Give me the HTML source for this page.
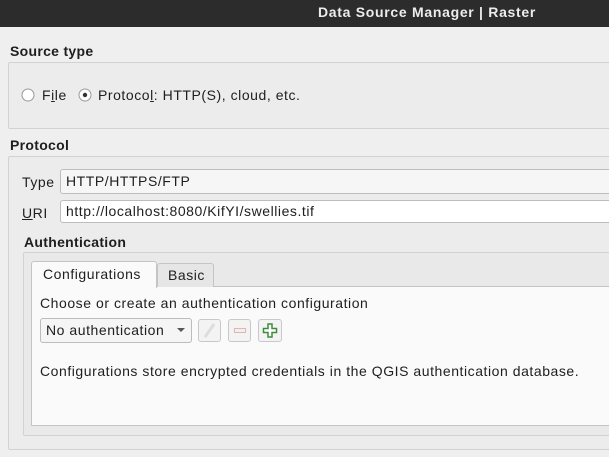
<!DOCTYPE html>
<html><head><style>
*{box-sizing:border-box;margin:0;padding:0}
body{width:609px;height:457px;background:#efefef;font-family:"Liberation Sans","DejaVu Sans",sans-serif;font-size:14px;letter-spacing:0.55px;color:#1e1e1e;position:relative;overflow:hidden}
.a{position:absolute;white-space:nowrap}
.title{left:0;top:0;width:609px;height:27px;background:#2c2c2c;color:#ececec;font-weight:bold;font-size:14px}
.b{font-weight:bold;letter-spacing:0.3px}
.grp{border:1px solid #d2d2d2;background:#ececec;border-radius:2px}
.inp{background:#fff;border:1px solid #bdbdbd;border-radius:3px;padding:3px 5px;font-size:14px}
.btn{border:1px solid #c8c8c8;border-radius:3px;background:#f3f3f3}
</style></head><body>
<div class="a title"><span class="a" style="left:318px;top:4px;letter-spacing:0.7px">Data Source Manager | Raster</span></div>
<div class="a b" style="left:10px;top:43px">Source type</div>
<div class="a grp" style="left:8px;top:62px;width:620px;height:67px"></div>
<svg class="a" style="left:21px;top:88px" width="14" height="14"><circle cx="7" cy="7" r="6" fill="#fff" stroke="#9a9a9a"/></svg>
<span class="a" style="left:42px;top:87px">F<u>i</u>le</span>
<svg class="a" style="left:78px;top:88px" width="14" height="14"><circle cx="7" cy="7" r="6" fill="#fff" stroke="#9a9a9a"/><circle cx="7" cy="7" r="2.2" fill="#333"/></svg>
<span class="a" style="left:98px;top:87px">Protoco<u>l</u>: HTTP(S), cloud, etc.</span>
<div class="a b" style="left:10px;top:137px">Protocol</div>
<div class="a grp" style="left:8px;top:156px;width:620px;height:294px"></div>
<span class="a" style="left:22px;top:174px">Type</span>
<div class="a inp" style="left:60px;top:169px;width:560px;height:25px;background:#f6f6f6">HTTP/HTTPS/FTP</div>
<span class="a" style="left:22px;top:205px"><u>U</u>RI</span>
<div class="a inp" style="left:60px;top:200px;width:560px;height:23px;padding-top:2px">http://localhost:8080/KifYI/swellies.tif</div>
<div class="a b" style="left:24px;top:234px">Authentication</div>
<div class="a grp" style="left:23px;top:252px;width:600px;height:184px;background:#e9e9e9"></div>
<div class="a" style="left:31px;top:286px;width:590px;height:140px;background:#fafafa;border:1px solid #c4c4c4"></div>
<div class="a" style="left:157px;top:263px;width:57px;height:24px;background:#e6e6e6;border:1px solid #c4c4c4;border-bottom:none;border-radius:3px 3px 0 0"></div>
<span class="a" style="left:168px;top:267px">Basic</span>
<div class="a" style="left:31px;top:261px;width:126px;height:27px;background:#fafafa;border:1px solid #c4c4c4;border-bottom:none;border-radius:3px 3px 0 0"></div>
<span class="a" style="left:43px;top:266px">Configurations</span>
<span class="a" style="left:40px;top:295px">Choose or create an authentication configuration</span>
<div class="a inp" style="left:40px;top:318px;width:152px;height:25px;background:#f5f5f5;border-color:#bcbcbc">No authentication</div>
<svg class="a" style="left:176px;top:327px" width="10" height="6"><path d="M1 1L5 5L9 1Z" fill="#555"/></svg>
<div class="a btn" style="left:198px;top:319px;width:23px;height:23px"></div>
<svg class="a" style="left:198px;top:319px" width="23" height="23"><path d="M7 18L16 5" stroke="#ddd" stroke-width="3"/></svg>
<div class="a btn" style="left:228px;top:319px;width:23px;height:23px"></div>
<div class="a" style="left:234px;top:328px;width:12px;height:5px;border:1px solid #d8b8b8;background:#f4eeee"></div>
<div class="a btn" style="left:258px;top:319px;width:24px;height:23px"></div>
<svg class="a" style="left:258px;top:319px" width="24" height="23"><path d="M10 5h4v4.5h4.5v4H14V18h-4v-4.5H5.5v-4H10z" fill="#fff" stroke="#3d8b3d" stroke-width="1.5"/></svg>
<span class="a" style="left:40px;top:363px">Configurations store encrypted credentials in the QGIS authentication database.</span>
</body></html>
